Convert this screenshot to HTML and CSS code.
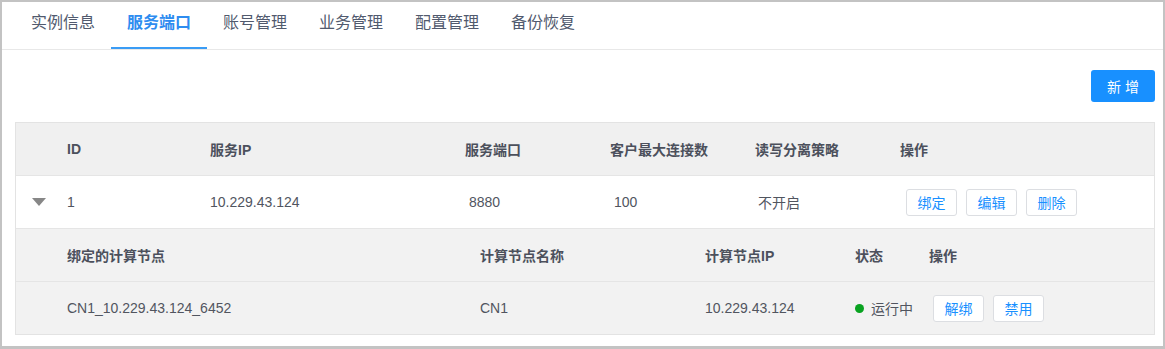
FILE: index.html
```html
<!DOCTYPE html>
<html lang="zh-CN">
  <head>
    <meta charset="UTF-8" />
    <meta name="viewport" content="width=device-width, initial-scale=1.0" />
    <title>服务端口</title>
    <link rel="stylesheet" href="styles.css">
  </head>
  <body>
    <div class="frame">
      <div class="tabs">
        <a href="#" class="tab">实例信息</a>
        <a href="#" class="tab active">服务端口</a>
        <a href="#" class="tab">账号管理</a>
        <a href="#" class="tab">业务管理</a>
        <a href="#" class="tab">配置管理</a>
        <a href="#" class="tab">备份恢复</a>
      </div>

      <div class="content">
        <div class="toolbar">
          <button class="btn-primary">新 增</button>
        </div>

        <div class="table">
          <div class="row head">
            <div class="cell c-expand"></div>
            <div class="cell c-id">ID</div>
            <div class="cell c-ip">服务IP</div>
            <div class="cell c-port">服务端口</div>
            <div class="cell c-conn">客户最大连接数</div>
            <div class="cell c-rw">读写分离策略</div>
            <div class="cell c-ops">操作</div>
          </div>
          <div class="row">
            <div class="cell c-expand"><span class="arrow"></span></div>
            <div class="cell c-id">1</div>
            <div class="cell c-ip">10.229.43.124</div>
            <div class="cell c-port shift">8880</div>
            <div class="cell c-conn shift">100</div>
            <div class="cell c-rw shift-s">不开启</div>
            <div class="cell c-ops ops">
              <button class="btn">绑定</button>
              <button class="btn">编辑</button>
              <button class="btn">删除</button>
            </div>
          </div>

          <!-- 展开的子表 -->
          <div class="row sub head">
            <div class="cell s-node">绑定的计算节点</div>
            <div class="cell s-name">计算节点名称</div>
            <div class="cell s-ip">计算节点IP</div>
            <div class="cell s-state">状态</div>
            <div class="cell s-ops">操作</div>
          </div>
          <div class="row sub last">
            <div class="cell s-node">CN1_10.229.43.124_6452</div>
            <div class="cell s-name">CN1</div>
            <div class="cell s-ip">10.229.43.124</div>
            <div class="cell s-state"><span class="dot"></span>运行中</div>
            <div class="cell s-ops ops-sub">
              <button class="btn">解绑</button>
              <button class="btn">禁用</button>
            </div>
          </div>
        </div>
      </div>
    </div>
  </body>
</html>
```

FILE: styles.css
```css
body {
  font-family: "Liberation Sans", "Noto Sans CJK SC", sans-serif;
  background-color: #fff;
  margin: 0;
  padding: 0;
  color: #51555f;
}

.frame {
  width: 1165px;
  height: 349px;
  box-sizing: border-box;
  border: 2px solid #c3c3c3;
  border-bottom-width: 3px;
}

.tabs {
  display: flex;
  height: 47px;
  padding-left: 13px;
  border-bottom: 1px solid #e8e8e8;
}

.tab {
  display: block;
  box-sizing: border-box;
  height: 47px;
  padding: 10px 16px 0;
  font-size: 16px;
  line-height: 22px;
  color: #515a6e;
  text-decoration: none;
}

.tab.active {
  color: #2d8cf0;
  font-weight: bold;
  border-bottom: 2px solid #3a9cf5;
}

.content {
  padding: 20px 8px 0 13px;
}

.toolbar {
  display: flex;
  justify-content: flex-end;
  margin-bottom: 20px;
}

.btn-primary {
  width: 64px;
  height: 32px;
  border: none;
  border-radius: 3px;
  background-color: #1890ff;
  color: #fff;
  font-family: inherit;
  font-size: 14px;
  cursor: pointer;
}

.table {
  border: 1px solid #e3e3e3;
}

.row {
  display: flex;
  align-items: center;
  height: 53px;
  box-sizing: border-box;
  border-bottom: 1px solid #e5e5e5;
  font-size: 14px;
}

.row.head {
  background-color: #f0f0f0;
  font-weight: bold;
  color: #4c505c;
}

.row.sub {
  background-color: #f2f2f2;
}

.row.last {
  height: 52px;
  border-bottom: none;
}

.cell {
  box-sizing: border-box;
  white-space: nowrap;
}

.c-expand { width: 51px; padding-left: 16px; }
.c-id { width: 143px; }
.c-ip { width: 255px; }
.c-port { width: 145px; }
.c-conn { width: 145px; }
.c-rw { width: 145px; }
.c-ops { flex: 1; }

.shift { padding-left: 4px; }
.shift-s { padding-left: 3px; }

.arrow {
  display: block;
  width: 0;
  height: 0;
  border-left: 7.5px solid transparent;
  border-right: 7.5px solid transparent;
  border-top: 8px solid #878787;
}

.s-node { width: 464px; padding-left: 51px; }
.s-name { width: 225px; }
.s-ip { width: 150px; }
.s-state { width: 74px; display: flex; align-items: center; }
.s-ops { flex: 1; }

.dot {
  width: 9px;
  height: 9px;
  border-radius: 50%;
  background-color: #09a321;
  margin-right: 7px;
}

.ops { display: flex; gap: 9px; padding-left: 6px; }
.ops-sub { display: flex; gap: 9px; padding-left: 4px; }

.btn {
  width: 51px;
  height: 27px;
  padding: 0;
  border: 1px solid #dcdee2;
  border-radius: 3px;
  background-color: #fff;
  color: #1890ff;
  font-family: inherit;
  font-size: 14px;
  cursor: pointer;
}
```
